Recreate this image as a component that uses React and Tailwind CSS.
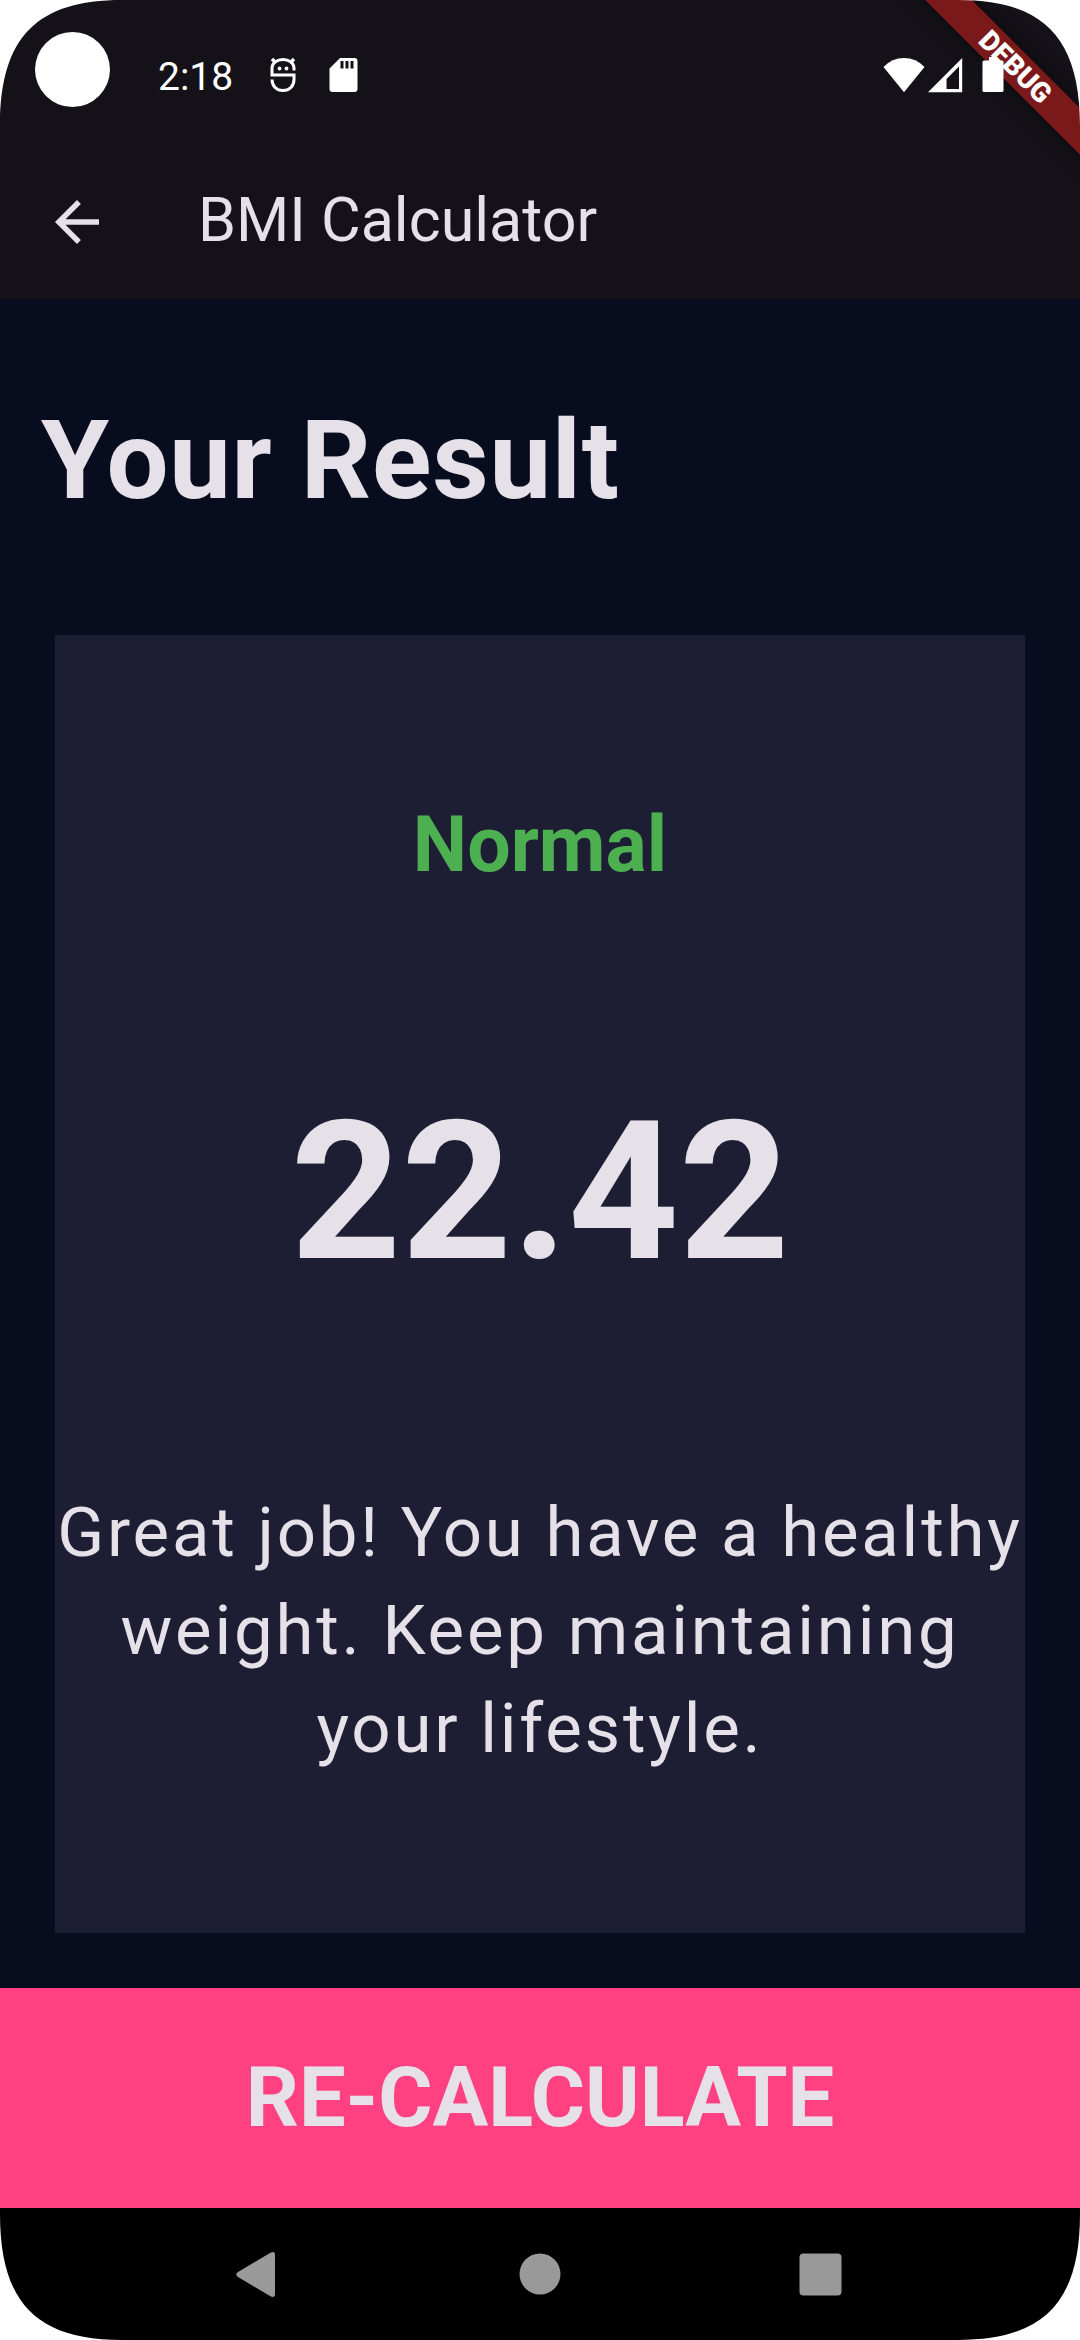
function StatusBar() {
  return (
    <div className="flex h-[145px] items-center justify-between pt-[5px] pr-[76px] pl-[35px] text-white">
      <div className="flex items-center">
        <div className="mb-[11px] size-[75px] rounded-full bg-white" />
        <span className="ml-[48px] pt-1 text-[39px] leading-[46px]">2:18</span>
        <svg className="ml-[37px]" width="26" height="36" viewBox="0 0 26 36" fill="none" stroke="currentColor" strokeWidth="3">
          <path d="M24 13.500V11C24 6 19 2.500 13 2.500S2 6 2 11V18H24V22.500C24 29 19.500 33.500 13 33.500S2 29 2 22.500" />
          <path d="M2 2L6 6M24 2L20 6" strokeWidth="3.500" />
          <circle cx="9.500" cy="11.500" r="1.900" fill="currentColor" stroke="none" />
          <circle cx="16.500" cy="11.500" r="1.900" fill="currentColor" stroke="none" />
        </svg>
        <svg className="ml-[33px]" width="29" height="36" viewBox="0 0 29 36" fill="currentColor" fillRule="evenodd">
          <path d="M11 1H25.500A3 3 0 0 1 28.500 4V32A3 3 0 0 1 25.500 35H3.500A3 3 0 0 1 .5 32V11.500ZM11.500 4V11.500H14.500V4ZM16.500 4V11.500H19.500V4ZM21.500 4V11.500H24.500V4Z" />
        </svg>
      </div>
      <div className="flex items-center">
        <svg width="42" height="36" viewBox="0 0 42 36" fill="currentColor">
          <path d="M.5 10Q9 1 21 1T41.500 10L21 35.200Z" />
        </svg>
        <svg className="ml-[2px]" width="36" height="36" viewBox="0 0 36 36" fill="currentColor" fillRule="evenodd">
          <path d="M35.200 1V35.200H1ZM32 9.500L19.500 22V32H32Z" />
        </svg>
        <svg className="ml-[19px]" width="22" height="36" viewBox="0 0 22 36" fill="currentColor">
          <path d="M7 0H15V3.500H20A1.500 1.500 0 0 1 21.500 5V33.500A1.500 1.500 0 0 1 20 35H2A1.500 1.500 0 0 1 .5 33.500V5A1.500 1.500 0 0 1 2 3.500H7Z" />
        </svg>
      </div>
    </div>
  );
}

function AppBar() {
  return (
    <header className="flex h-[154px] items-center pl-[44px]">
      <button type="button" aria-label="Back" className="size-[66px]">
        <svg viewBox="0 0 24 24" className="size-full" fill="currentColor">
          <path d="M20 11H7.830l5.590-5.590L12 4l-8 8 8 8 1.410-1.410L7.830 13H20v-2z" />
        </svg>
      </button>
      <h1 className="ml-[88px] pb-1 text-[61px] leading-[76px]">BMI Calculator</h1>
    </header>
  );
}

function DebugBanner() {
  return (
    <div className="absolute top-[49px] -right-[84px] flex h-[33px] w-[300px] rotate-45 items-center justify-center bg-[#b71c1c]/63 pl-1 text-[28px] leading-none font-black text-white shadow-[0_0_16px_rgba(0,0,0,0.5)]">
      DEBUG
    </div>
  );
}

function ScreenCorner({ className }) {
  return (
    <svg className={className} width="126" height="126" viewBox="0 0 126 126" fill="#fff" aria-hidden="true">
      <path d="M0 0H122C37 0 0 37 0 126Z" />
    </svg>
  );
}

function NavBar() {
  return (
    <nav className="flex h-[132px] items-center justify-between bg-black px-[226px] text-[#999]">
      <button type="button" aria-label="System back" className="size-[60px]">
        <svg viewBox="0 0 60 60" className="size-full" fill="currentColor">
          <path d="M44 9Q49 6.500 49 11V50Q49 54.500 44 52L12 33Q8.500 30.500 12 28Z" />
        </svg>
      </button>
      <button type="button" aria-label="Home" className="size-[60px]">
        <svg viewBox="0 0 60 60" className="size-full" fill="currentColor">
          <circle cx="30" cy="30" r="20.500" />
        </svg>
      </button>
      <button type="button" aria-label="Recent apps" className="size-[60px]">
        <svg viewBox="0 0 60 60" className="size-full" fill="currentColor">
          <rect x="5.500" y="9.500" width="42" height="42" rx="4" />
        </svg>
      </button>
    </nav>
  );
}

export default function App() {
  return (
    <div className="relative flex min-h-screen flex-col overflow-hidden bg-[#070d1f] font-['Roboto',sans-serif] text-[#e6e0e9]">
      <div className="bg-[#141218]">
        <DebugBanner />
        <div className="relative">
          <StatusBar />
        </div>
        <AppBar />
      </div>
      <main className="flex flex-1 flex-col">
        <h2 className="px-[41px] pt-[83px] pb-[41px] text-[110px] leading-[157px] font-bold tracking-[0.007em]">Your Result</h2>
        <section className="m-[55px] flex flex-1 flex-col items-center justify-evenly bg-[#1d1e33] text-center">
          <p className="text-[77px] leading-[110px] font-bold text-[#4caf50]">Normal</p>
          <p className="text-[193px] leading-[275px] font-bold">22.42</p>
          <p className="text-[69px] leading-[98px] tracking-[0.04em]">
            Great job! You have a healthy weight. Keep maintaining your lifestyle.
          </p>
        </section>
      </main>
      <button type="button" className="h-[220px] bg-[#ff4081] text-[83px] leading-[118px] font-bold">
        RE-CALCULATE
      </button>
      <NavBar />
      <ScreenCorner className="absolute top-0 left-0" />
      <ScreenCorner className="absolute top-0 right-0 -scale-x-100" />
      <ScreenCorner className="absolute bottom-0 left-0 -scale-y-100" />
      <ScreenCorner className="absolute right-0 bottom-0 rotate-180" />
    </div>
  );
}
